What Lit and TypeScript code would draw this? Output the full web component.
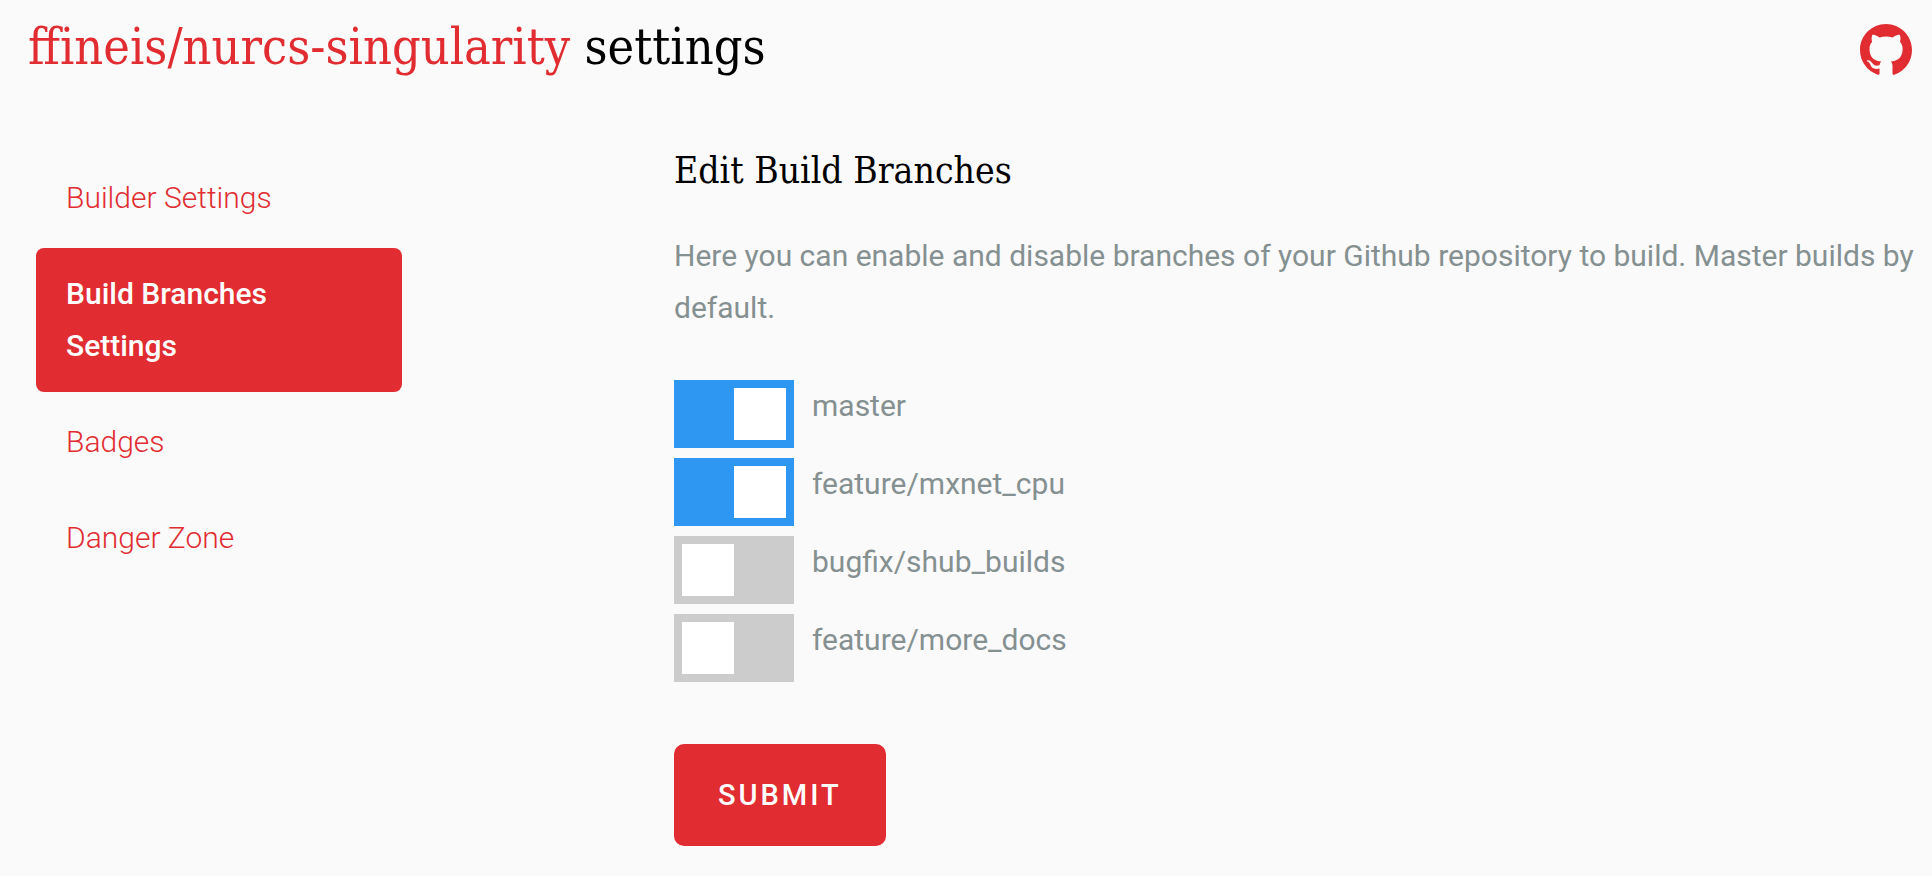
import { LitElement, html, css } from "lit";
import { customElement, state } from "lit/decorators.js";

interface Branch {
  name: string;
  enabled: boolean;
}

@customElement("app-root")
export class AppRoot extends LitElement {
  static styles = css`
    :host {
      --red: #e12c31;
      --text: #859091;
      display: block;
      min-height: 100vh;
      box-sizing: border-box;
      padding: 16px 16px 30px 28px;
      background: #fafafa;
      color: var(--text);
      font: 400 30px/52px Roboto, sans-serif;
    }
    a {
      color: var(--red);
      text-decoration: none;
    }
    .header {
      display: flex;
      align-items: center;
      justify-content: space-between;
      padding-right: 4px;
    }
    .title,
    .heading {
      margin: 0;
      color: #000;
      font-family: "Roboto Slab", "DejaVu Serif Condensed", "DejaVu Serif", serif;
      font-weight: 300;
    }
    .title {
      padding-bottom: 6px;
      font-size: 50px;
      line-height: 62px;
    }
    .github {
      display: block;
    }
    .github svg {
      display: block;
      width: 52px;
      height: 52px;
      fill: var(--red);
    }
    .layout {
      display: grid;
      grid-template-columns: 366fr 1242fr;
      column-gap: 272px;
      align-items: start;
      padding-left: 8px;
      padding-top: 60px;
    }
    .nav {
      display: flex;
      flex-direction: column;
      gap: 4px;
      padding-top: 8px;
    }
    .nav-link {
      padding: 20px 30px;
      border-radius: 8px;
      font-weight: 300;
    }
    .nav-link.active {
      padding-right: 100px;
      background: var(--red);
      color: #fff;
      font-weight: 500;
    }
    .heading {
      font-size: 37px;
      line-height: 54px;
    }
    .intro {
      margin: 32px 0 46px;
    }
    .branches {
      display: grid;
      gap: 10px;
    }
    .branch {
      display: flex;
      align-items: flex-start;
      gap: 18px;
    }
    .toggle {
      appearance: none;
      flex: none;
      display: flex;
      box-sizing: border-box;
      width: 120px;
      height: 68px;
      margin: 0;
      padding: 8px;
      background: #ccc;
      cursor: pointer;
    }
    .toggle::before {
      content: "";
      width: 52px;
      height: 52px;
      background: #fff;
      transition: transform 0.3s;
    }
    .toggle:checked {
      background: #2d97f1;
    }
    .toggle:checked::before {
      transform: translateX(52px);
    }
    .submit {
      display: block;
      margin-top: 62px;
      padding: 25px 44px;
      border: 0;
      border-radius: 10px;
      background: var(--red);
      color: #fff;
      font: 500 29px/52px Roboto, sans-serif;
      letter-spacing: 3px;
      text-transform: uppercase;
      cursor: pointer;
    }
  `;

  @state() private branches: Branch[] = [
    { name: "master", enabled: true },
    { name: "feature/mxnet_cpu", enabled: true },
    { name: "bugfix/shub_builds", enabled: false },
    { name: "feature/more_docs", enabled: false },
  ];

  private sections = ["Builder Settings", "Build Branches Settings", "Badges", "Danger Zone"];

  private toggle(index: number) {
    this.branches = this.branches.map((b, i) => (i === index ? { ...b, enabled: !b.enabled } : b));
  }

  render() {
    return html`
      <header class="header">
        <h1 class="title"><a href="#repo">ffineis/nurcs-singularity</a> settings</h1>
        <a class="github" href="#github" aria-label="GitHub">
          <svg viewBox="0 0 16 16" aria-hidden="true">
            <path
              d="M8 0C3.58 0 0 3.58 0 8c0 3.54 2.29 6.53 5.47 7.59.4.07.55-.17.55-.38 0-.19-.01-.82-.01-1.49-2.01.37-2.53-.49-2.69-.94-.09-.23-.48-.94-.82-1.13-.28-.15-.68-.52-.01-.53.63-.01 1.08.58 1.23.82.72 1.21 1.87.87 2.33.66.07-.52.28-.87.51-1.07-1.78-.2-3.64-.89-3.64-3.95 0-.87.31-1.59.82-2.15-.08-.2-.36-1.02.08-2.12 0 0 .67-.21 2.2.82.64-.18 1.32-.27 2-.27s1.36.09 2 .27c1.53-1.04 2.2-.82 2.2-.82.44 1.1.16 1.92.08 2.12.51.56.82 1.27.82 2.15 0 3.07-1.87 3.75-3.65 3.95.29.25.54.73.54 1.48 0 1.07-.01 1.93-.01 2.2 0 .21.15.46.55.38A8.01 8.01 0 0 0 16 8c0-4.42-3.58-8-8-8z"
            />
          </svg>
        </a>
      </header>
      <div class="layout">
        <nav class="nav">
          ${this.sections.map(
            (s, i) => html`<a class="nav-link ${i === 1 ? "active" : ""}" href="#section-${i}">${s}</a>`
          )}
        </nav>
        <main>
          <h2 class="heading">Edit Build Branches</h2>
          <p class="intro">
            Here you can enable and disable branches of your Github repository to build. Master builds by default.
          </p>
          <form @submit=${(e: Event) => e.preventDefault()}>
            <div class="branches">
              ${this.branches.map(
                (b, i) => html`<div class="branch">
                  <input
                    class="toggle"
                    type="checkbox"
                    id="branch-${i}"
                    .checked=${b.enabled}
                    @change=${() => this.toggle(i)}
                  />
                  <label for="branch-${i}">${b.name}</label>
                </div>`
              )}
            </div>
            <button class="submit" type="submit">Submit</button>
          </form>
        </main>
      </div>
    `;
  }
}
